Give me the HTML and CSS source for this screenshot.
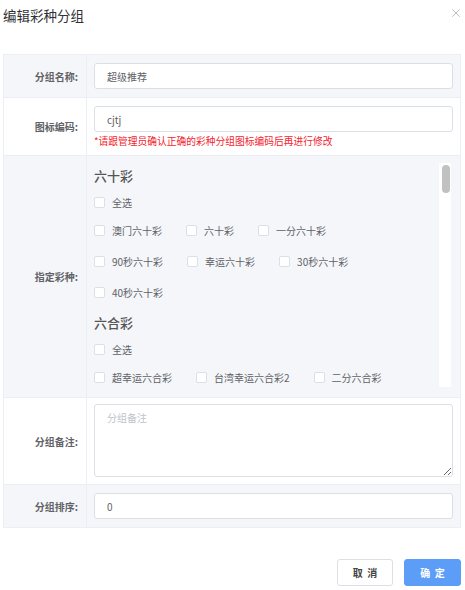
FILE: index.html
```html
<!DOCTYPE html>
<html lang="zh-CN">
<head>
<meta charset="utf-8">
<title>编辑彩种分组</title>
<link rel="stylesheet" href="styles.css">
</head>
<body>
<div class="dialog">
  <div class="header">
    <span class="title">编辑彩种分组</span>
    <span class="close"><svg width="8" height="8" viewBox="0 0 8 8"><path d="M0.3 0.3L7.7 7.7M7.7 0.3L0.3 7.7" stroke="#b4b7bc" stroke-width="0.9" fill="none"/></svg></span>
  </div>
  <div class="table">
    <div class="row alt">
      <div class="label">分组名称:</div>
      <div class="cell"><input class="input" type="text" value="超级推荐"></div>
    </div>
    <div class="row">
      <div class="label">图标编码:</div>
      <div class="cell cell-code">
        <input class="input" type="text" value="cjtj">
        <div class="error">*请跟管理员确认正确的彩种分组图标编码后再进行修改</div>
      </div>
    </div>
    <div class="row alt">
      <div class="label">指定彩种:</div>
      <div class="cell cell-scroll">
        <div class="scroll-wrap">
          <div class="scroll">
            <div class="group">
              <div class="group-title">六十彩</div>
              <div class="cb-row all"><label class="cb"><span class="box"></span>全选</label></div>
              <div class="cb-row"><label class="cb"><span class="box"></span>澳门六十彩</label><label class="cb"><span class="box"></span>六十彩</label><label class="cb"><span class="box"></span>一分六十彩</label></div>
              <div class="cb-row"><label class="cb"><span class="box"></span>90秒六十彩</label><label class="cb"><span class="box"></span>幸运六十彩</label><label class="cb"><span class="box"></span>30秒六十彩</label></div>
              <div class="cb-row"><label class="cb"><span class="box"></span>40秒六十彩</label></div>
            </div>
            <div class="group">
              <div class="group-title">六合彩</div>
              <div class="cb-row all"><label class="cb"><span class="box"></span>全选</label></div>
              <div class="cb-row"><label class="cb"><span class="box"></span>超幸运六合彩</label><label class="cb"><span class="box"></span>台湾幸运六合彩2</label><label class="cb"><span class="box"></span>二分六合彩</label></div>
              <div class="cb-row"><label class="cb"><span class="box"></span>香港六合彩</label><label class="cb"><span class="box"></span>极速六合彩</label><label class="cb"><span class="box"></span>五分六合彩</label></div>
            </div>
          </div>
          <div class="track"><div class="thumb"></div></div>
        </div>
      </div>
    </div>
    <div class="row">
      <div class="label">分组备注:</div>
      <div class="cell cell-note"><textarea class="textarea" placeholder="分组备注"></textarea></div>
    </div>
    <div class="row alt">
      <div class="label">分组排序:</div>
      <div class="cell"><input class="input" type="text" value="0"></div>
    </div>
  </div>
  <div class="footer">
    <button class="btn cancel" type="button">取 消</button>
    <button class="btn primary" type="button">确 定</button>
  </div>
</div>
</body>
</html>
```

FILE: styles.css
```css
* {
  box-sizing: border-box;
}

body {
  margin: 0;
  background: #fff;
  font-family: "Noto Sans CJK SC", "Liberation Sans", sans-serif;
  color: #606266;
}

.dialog {
  width: 458px;
  margin-left: 3px;
}

.header {
  display: flex;
  justify-content: space-between;
  align-items: flex-start;
  height: 25px;
  padding-top: 5px;
}

.title {
  font-size: 13.5px;
  line-height: 20px;
  color: #303133;
}

.close {
  display: flex;
  width: 8px;
  height: 8px;
  margin-top: 4px;
  margin-right: 1px;
}

.table {
  margin-top: 29px;
  border: 1px solid #ebeef5;
  border-bottom: none;
}

.row {
  display: flex;
  background: #fff;
  border-bottom: 1px solid #ebeef5;
}

.row.alt {
  background: #f5f6fa;
}

.label {
  flex: none;
  width: 83px;
  display: flex;
  align-items: center;
  justify-content: flex-end;
  padding-right: 8px;
  border-right: 1px solid #ebeef5;
  font-size: 10px;
  font-weight: bold;
  color: #606266;
}

.cell {
  flex: 1;
  min-width: 0;
  padding: 8px 7px 8px 7px;
}

.input {
  display: block;
  width: 100%;
  height: 26px;
  padding: 0 12px;
  border: 1px solid #dcdfe6;
  border-radius: 3px;
  background: #fff;
  font-family: inherit;
  font-size: 10px;
  color: #606266;
  outline: none;
}

.cell-code {
  padding-bottom: 7px;
}

.error {
  margin-top: 2px;
  font-size: 9.75px;
  line-height: 14px;
  color: #f5222d;
  white-space: nowrap;
}

.cell-scroll {
  padding: 7px 7px 10px 7px;
}

.scroll-wrap {
  display: flex;
  height: 224px;
  margin-right: 2px;
}

.scroll {
  flex: 1;
  min-width: 0;
  overflow-y: auto;
  scrollbar-width: none;
}

.scroll::-webkit-scrollbar {
  display: none;
}

.track {
  flex: none;
  width: 12px;
  background: #fff;
}

.thumb {
  width: 8px;
  height: 28px;
  margin: 2px 2px 0 3px;
  border-radius: 4px;
  background: #c1c1c1;
}

.group-title {
  height: 26px;
  font-size: 13px;
  line-height: 26px;
  font-weight: 500;
  color: #555;
}

.group + .group .group-title {
  margin-top: 2px;
}

.cb-row {
  display: flex;
  align-items: center;
  gap: 24px;
  height: 31px;
}

.cb-row.all {
  height: 26px;
}

.cb {
  display: flex;
  align-items: center;
  font-size: 10px;
  color: #606266;
  white-space: nowrap;
}

.box {
  width: 11px;
  height: 11px;
  margin-right: 7px;
  border: 1px solid #dcdfe6;
  border-radius: 2px;
  background: #fff;
}

.cell-note {
  padding: 6px 7px 7px 7px;
}

.textarea {
  display: block;
  width: 100%;
  height: 73px;
  padding: 6px 12px;
  border: 1px solid #dcdfe6;
  border-radius: 3px;
  background: #fff;
  font-family: inherit;
  font-size: 10px;
  line-height: 14px;
  color: #606266;
  outline: none;
}

.textarea::placeholder {
  color: #c0c4cc;
}

.footer {
  display: flex;
  justify-content: flex-end;
  gap: 11px;
  margin-top: 31px;
}

.btn {
  height: 27px;
  padding: 0;
  border: 1px solid #dcdfe6;
  border-radius: 3px;
  background: #fff;
  font-family: inherit;
  font-size: 10px;
  font-weight: 600;
  word-spacing: 2px;
  color: #444;
}

.btn.cancel {
  width: 56px;
}

.btn.primary {
  width: 57px;
  background: #5c9df8;
  border-color: #5c9df8;
  color: #fff;
}
```
